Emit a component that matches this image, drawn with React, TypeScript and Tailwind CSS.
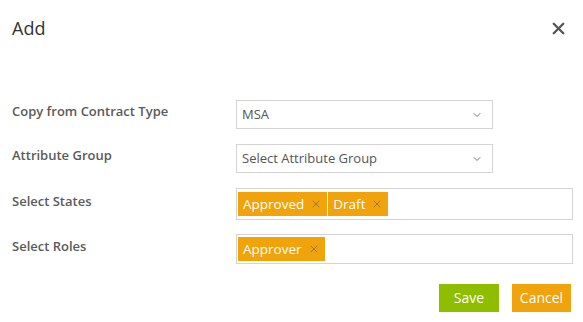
import { X, ChevronDown } from "lucide-react";

function Tag({ label }: { label: string }) {
  return (
    <span className="inline-flex h-6 items-center gap-[6px] bg-[#f0a30a] pl-[5px] pr-[5px] text-[13.5px] text-white">
      {label}
      <X size={12} strokeWidth={1.3} className="text-[#666]" />
    </span>
  );
}

function Row({ label, children, className = "" }: { label: string; children: React.ReactNode; className?: string }) {
  return (
    <div className={`flex items-center ${className}`}>
      <label className="-mt-[5px] w-[224px] shrink-0 text-[13px] font-semibold text-[#5a5a5a]">{label}</label>
      {children}
    </div>
  );
}

function Select({ value }: { value: string }) {
  return (
    <div className="flex h-[29px] w-[257px] items-center justify-between border border-[#d4d4d4] bg-white pl-[5px] pr-[9px] text-[13px] text-[#555]">
      <span>{value}</span>
      <ChevronDown size={12} strokeWidth={1.6} className="text-[#555]" />
    </div>
  );
}

export default function App() {
  return (
    <div className="h-[322px] w-[583px] bg-white font-['Open_Sans',sans-serif]">
      <header className="flex items-center justify-between pl-3 pr-[15px] pt-[14px]">
        <h1 className="text-[18px] leading-[28px] text-[#333]">Add</h1>
        <X size={19} strokeWidth={3} className="text-[#555]" />
      </header>
      <div className="mt-[58px] flex flex-col pl-3 pr-[10px]">
        <Row label="Copy from Contract Type">
          <Select value="MSA" />
        </Row>
        <Row label="Attribute Group" className="mt-[15px]">
          <Select value="Select Attribute Group" />
        </Row>
        <Row label="Select States" className="mt-[15px]">
          <div className="flex h-[32px] flex-1 items-center gap-px border border-[#d4d4d4] pl-px">
            <Tag label="Approved" />
            <Tag label="Draft" />
          </div>
        </Row>
        <Row label="Select Roles" className="mt-[14px]">
          <div className="flex h-[30px] flex-1 items-center border border-[#d4d4d4] pl-px">
            <Tag label="Approver" />
          </div>
        </Row>
        <div className="mt-[20px] flex justify-end gap-[13px] pr-[2px]">
          <button className="h-[28px] w-[60px] bg-[#8fbe00] text-[14px] leading-none text-white">Save</button>
          <button className="h-[28px] w-[59px] bg-[#f0a30a] text-[14px] leading-none text-white">Cancel</button>
        </div>
      </div>
    </div>
  );
}
